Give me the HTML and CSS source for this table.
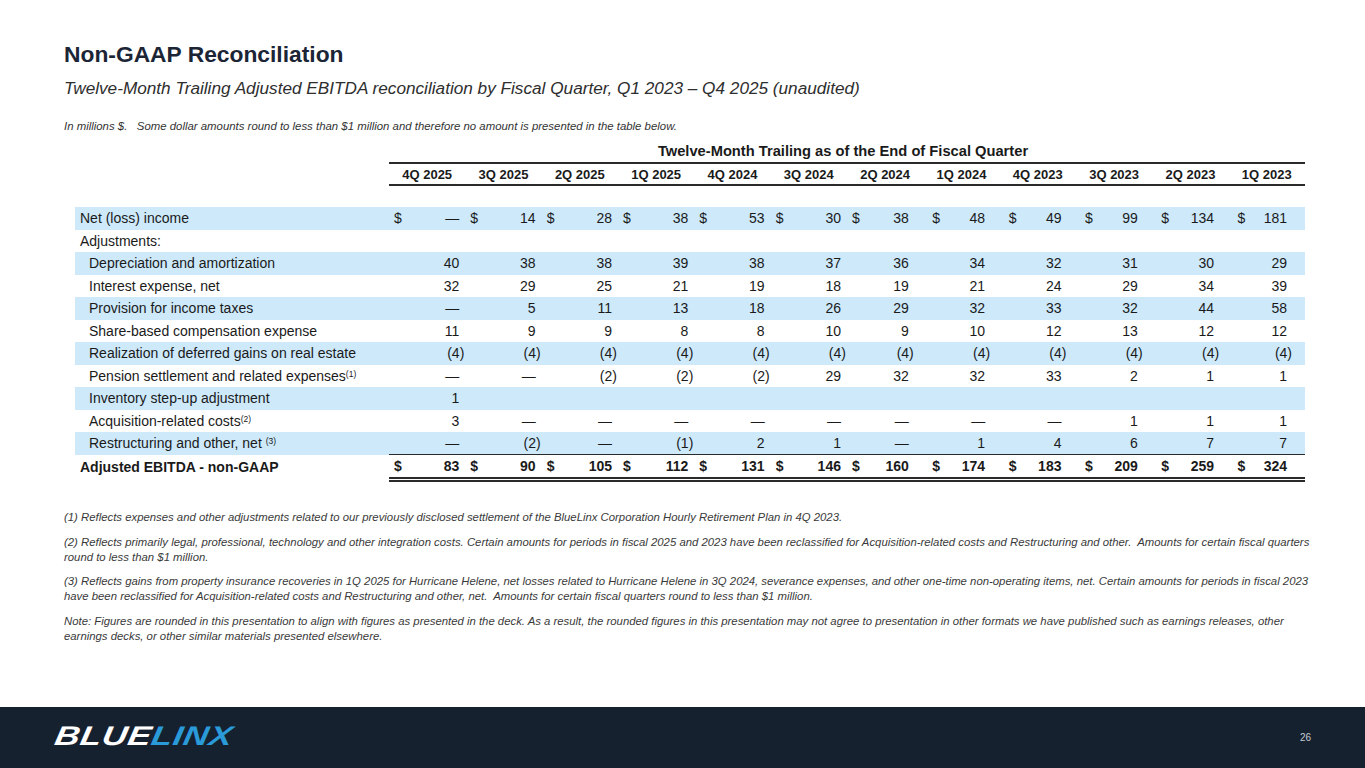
FILE: index.html
```html
<!DOCTYPE html>
<html lang="en">
<head>
<meta charset="utf-8">
<title>Non-GAAP Reconciliation</title>
<link rel="stylesheet" href="styles.css">
</head>
<body>
<div class="slide">
  <h1 class="title">Non-GAAP Reconciliation</h1>
  <h2 class="subtitle">Twelve-Month Trailing Adjusted EBITDA reconciliation by Fiscal Quarter, Q1 2023 – Q4 2025 (unaudited)</h2>
  <p class="note">In millions $.&nbsp;&nbsp; Some dollar amounts round to less than $1 million and therefore no amount is presented in the table below.</p>

  <table class="recon">
    <colgroup>
      <col class="c-label">
      <col class="c-val"><col class="c-val"><col class="c-val"><col class="c-val"><col class="c-val"><col class="c-val">
      <col class="c-val"><col class="c-val"><col class="c-val"><col class="c-val"><col class="c-val"><col class="c-val">
    </colgroup>
    <thead>
      <tr class="group">
        <th class="blank"></th>
        <th colspan="12">Twelve-Month Trailing as of the End of Fiscal Quarter</th>
      </tr>
      <tr class="heads">
        <th class="blank"></th>
        <th>4Q 2025</th><th>3Q 2025</th><th>2Q 2025</th><th>1Q 2025</th><th>4Q 2024</th><th>3Q 2024</th>
        <th>2Q 2024</th><th>1Q 2024</th><th>4Q 2023</th><th>3Q 2023</th><th>2Q 2023</th><th>1Q 2023</th>
      </tr>
      <tr class="spacer"><td colspan="13"></td></tr>
    </thead>
    <tbody>
      <tr class="band">
        <td class="lbl">Net (loss) income</td>
        <td><span class="d">$</span>—</td><td><span class="d">$</span>14</td><td><span class="d">$</span>28</td><td><span class="d">$</span>38</td><td><span class="d">$</span>53</td><td><span class="d">$</span>30</td>
        <td><span class="d">$</span>38</td><td><span class="d">$</span>48</td><td><span class="d">$</span>49</td><td><span class="d">$</span>99</td><td><span class="d">$</span>134</td><td><span class="d">$</span>181</td>
      </tr>
      <tr>
        <td class="lbl">Adjustments:</td>
        <td></td><td></td><td></td><td></td><td></td><td></td><td></td><td></td><td></td><td></td><td></td><td></td>
      </tr>
      <tr class="band">
        <td class="lbl ind">Depreciation and amortization</td>
        <td>40</td><td>38</td><td>38</td><td>39</td><td>38</td><td>37</td><td>36</td><td>34</td><td>32</td><td>31</td><td>30</td><td>29</td>
      </tr>
      <tr>
        <td class="lbl ind">Interest expense, net</td>
        <td>32</td><td>29</td><td>25</td><td>21</td><td>19</td><td>18</td><td>19</td><td>21</td><td>24</td><td>29</td><td>34</td><td>39</td>
      </tr>
      <tr class="band">
        <td class="lbl ind">Provision for income taxes</td>
        <td>—</td><td>5</td><td>11</td><td>13</td><td>18</td><td>26</td><td>29</td><td>32</td><td>33</td><td>32</td><td>44</td><td>58</td>
      </tr>
      <tr>
        <td class="lbl ind">Share-based compensation expense</td>
        <td>11</td><td>9</td><td>9</td><td>8</td><td>8</td><td>10</td><td>9</td><td>10</td><td>12</td><td>13</td><td>12</td><td>12</td>
      </tr>
      <tr class="band">
        <td class="lbl ind">Realization of deferred gains on real estate</td>
        <td class="neg">(4)</td><td class="neg">(4)</td><td class="neg">(4)</td><td class="neg">(4)</td><td class="neg">(4)</td><td class="neg">(4)</td>
        <td class="neg">(4)</td><td class="neg">(4)</td><td class="neg">(4)</td><td class="neg">(4)</td><td class="neg">(4)</td><td class="neg">(4)</td>
      </tr>
      <tr>
        <td class="lbl ind">Pension settlement and related expenses<sup>(1)</sup></td>
        <td>—</td><td>—</td><td class="neg">(2)</td><td class="neg">(2)</td><td class="neg">(2)</td><td>29</td><td>32</td><td>32</td><td>33</td><td>2</td><td>1</td><td>1</td>
      </tr>
      <tr class="band">
        <td class="lbl ind">Inventory step-up adjustment</td>
        <td>1</td><td></td><td></td><td></td><td></td><td></td><td></td><td></td><td></td><td></td><td></td><td></td>
      </tr>
      <tr>
        <td class="lbl ind">Acquisition-related costs<sup>(2)</sup></td>
        <td>3</td><td>—</td><td>—</td><td>—</td><td>—</td><td>—</td><td>—</td><td>—</td><td>—</td><td>1</td><td>1</td><td>1</td>
      </tr>
      <tr class="band">
        <td class="lbl ind">Restructuring and other, net <sup>(3)</sup></td>
        <td>—</td><td class="neg">(2)</td><td>—</td><td class="neg">(1)</td><td>2</td><td>1</td><td>—</td><td>1</td><td>4</td><td>6</td><td>7</td><td>7</td>
      </tr>
      <tr class="total">
        <td class="lbl">Adjusted EBITDA - non-GAAP</td>
        <td><span class="d">$</span>83</td><td><span class="d">$</span>90</td><td><span class="d">$</span>105</td><td><span class="d">$</span>112</td><td><span class="d">$</span>131</td><td><span class="d">$</span>146</td>
        <td><span class="d">$</span>160</td><td><span class="d">$</span>174</td><td><span class="d">$</span>183</td><td><span class="d">$</span>209</td><td><span class="d">$</span>259</td><td><span class="d">$</span>324</td>
      </tr>
    </tbody>
  </table>

  <div class="footnotes">
    <p>(1) Reflects expenses and other adjustments related to our previously disclosed settlement of the BlueLinx Corporation Hourly Retirement Plan in 4Q 2023.</p>
    <p>(2) Reflects primarily legal, professional, technology and other integration costs. Certain amounts for periods in fiscal 2025 and 2023 have been reclassified for Acquisition-related costs and Restructuring and other.&nbsp; Amounts for certain fiscal quarters round to less than $1 million.</p>
    <p>(3) Reflects gains from property insurance recoveries in 1Q 2025 for Hurricane Helene, net losses related to Hurricane Helene in 3Q 2024, severance expenses, and other one-time non-operating items, net. Certain amounts for periods in fiscal 2023 have been reclassified for Acquisition-related costs and Restructuring and other, net.&nbsp; Amounts for certain fiscal quarters round to less than $1 million.</p>
    <p>Note: Figures are rounded in this presentation to align with figures as presented in the deck. As a result, the rounded figures in this presentation may not agree to presentation in other formats we have published such as earnings releases, other earnings decks, or other similar materials presented elsewhere.</p>
  </div>
</div>
<footer class="footer">
  <div class="logo"><span class="logo-blue">BLUE</span><span class="logo-linx">LINX</span></div>
  <div class="page-num">26</div>
</footer>
</body>
</html>
```

FILE: styles.css
```css
html, body {
  margin: 0;
  padding: 0;
}
body {
  width: 1365px;
  height: 768px;
  overflow: hidden;
  background: #ffffff;
  font-family: "Liberation Sans", Arial, sans-serif;
  color: #1a1a1a;
}
.slide {
  height: 707px;
  box-sizing: border-box;
  padding: 41px 0 0 64px;
}
.title {
  margin: 0;
  font-size: 22.8px;
  line-height: 26px;
  font-weight: bold;
  color: #1b2536;
}
.subtitle {
  margin: 11px 0 0;
  font-size: 17.2px;
  line-height: 20px;
  font-weight: normal;
  font-style: italic;
  color: #2e2e2e;
}
.note {
  margin: 21px 0 0;
  font-size: 11.4px;
  line-height: 14px;
  font-style: italic;
  color: #333;
}

/* table */
.recon {
  margin: 7px 0 0 11px;
  width: 1230px;
  table-layout: fixed;
  border-collapse: collapse;
  border-spacing: 0;
  font-size: 14px;
}
.c-label { width: 314px; }
.c-val { width: 76.33px; }
.recon th {
  padding: 0;
  white-space: nowrap;
}
.recon .group th {
  height: 21px;
  font-size: 14.7px;
  line-height: 17px;
  font-weight: bold;
  text-align: center;
  vertical-align: middle;
  border-bottom: 2px solid #2a2a2a;
  padding: 1px 8px 0 0;
}
.recon .heads th {
  height: 20px;
  font-size: 13px;
  line-height: 15px;
  font-weight: bold;
  text-align: center;
  vertical-align: middle;
  border-bottom: 2px solid #2a2a2a;
}
.recon .group th.blank, .recon .heads th.blank { border-bottom: none; }
.recon .spacer td { height: 21px; padding: 0; }
.recon tbody tr { height: 22.5px; }
.recon tbody td {
  text-align: right;
  vertical-align: middle;
  white-space: nowrap;
  line-height: 16px;
  padding: 0 6px 0 5px;
}
.recon tbody td:nth-child(n+8) { padding-right: 14.5px; }
.recon tbody td:nth-child(n+9) { padding-left: 9px; }
.recon tbody td:nth-child(13) { padding-right: 18px; }
.recon tbody td.neg { padding-right: 1px; }
.recon tbody td.neg:nth-child(n+8) { padding-right: 9.5px; }
.recon tbody td.neg:nth-child(13) { padding-right: 13px; }
.d { float: left; }
.recon tbody td.lbl {
  text-align: left;
  padding: 0 0 0 5px;
}
.recon tbody td.lbl.ind { padding-left: 14px; }
.band td { background: #cde9fa; }
sup {
  font-size: 8.5px;
  line-height: 0;
  vertical-align: 4px;
}
.recon .total td {
  font-weight: bold;
  height: 22px;
  border-top: 1px solid #2a2a2a;
  border-bottom: 5px double #2a2a2a;
}
.recon .total td.lbl { border: none; }

/* footnotes */
.footnotes {
  margin-top: 28px;
  width: 1256px;
  font-size: 11.35px;
  line-height: 15px;
  font-style: italic;
  color: #3a3a3a;
}
.footnotes p { margin: 0 0 9.5px; }

/* footer */
.footer {
  height: 61px;
  background: #16212f;
  display: flex;
  align-items: center;
  justify-content: space-between;
  padding: 0 55px 0 55px;
  box-sizing: border-box;
}
.logo {
  display: inline-block;
  font-family: "Liberation Sans", Arial, sans-serif;
  font-weight: bold;
  font-style: italic;
  font-size: 27px;
  line-height: 27px;
  letter-spacing: 0.5px;
  transform: scaleX(1.28) skewX(-8deg);
  transform-origin: left center;
  margin-top: -2px;
}
.logo-blue { color: #ffffff; }
.logo-linx { color: #2a9bd8; }
.page-num {
  font-size: 10px;
  color: #c5ccd5;
  margin-right: -1px;
  margin-top: -1px;
}
```
